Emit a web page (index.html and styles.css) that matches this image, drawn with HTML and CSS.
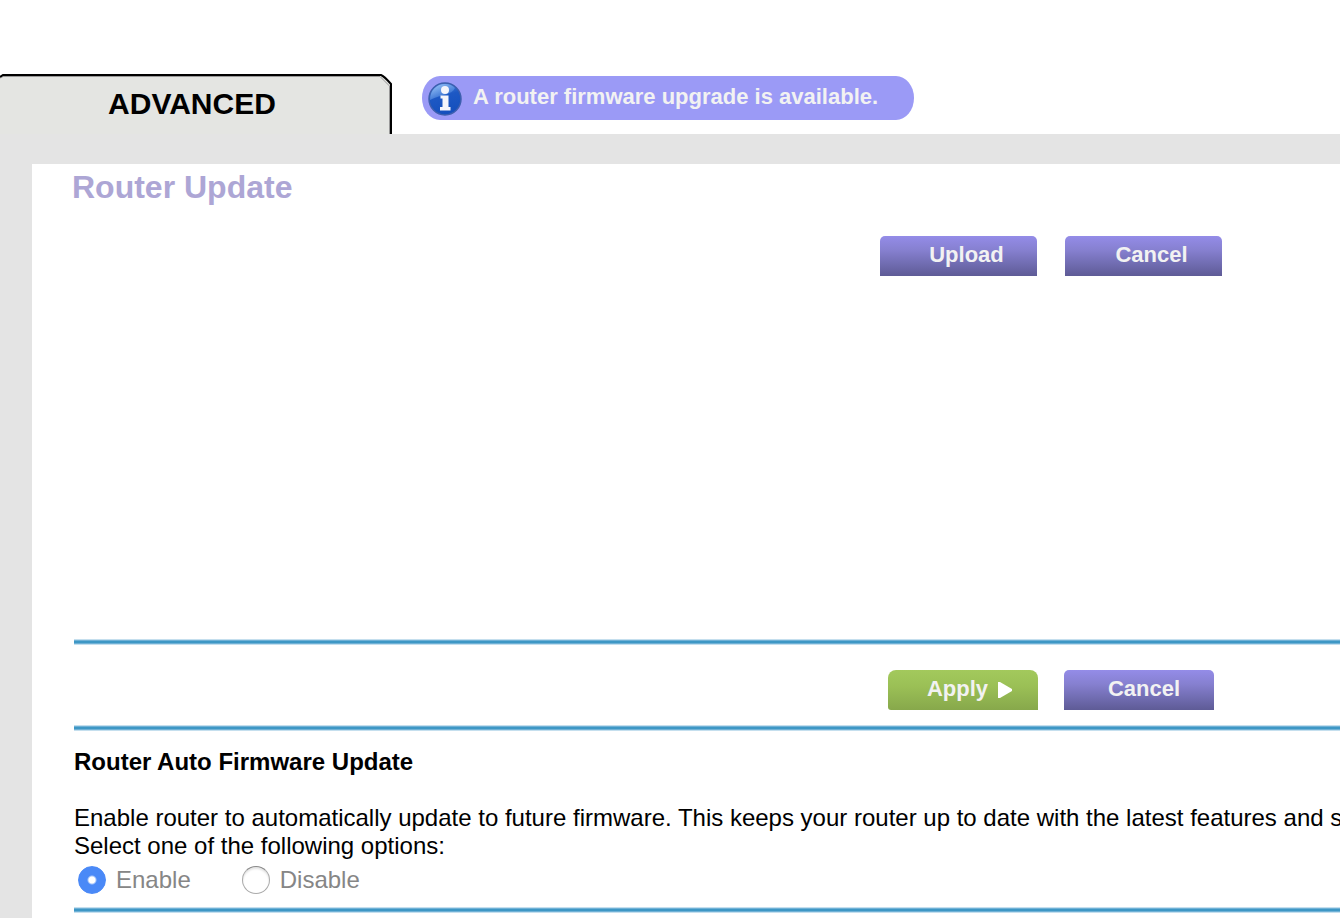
FILE: index.html
```html
<!DOCTYPE html>
<html lang="en">
<head>
<meta charset="utf-8">
<title>Router Update</title>
<link rel="stylesheet" href="styles.css">
</head>
<body>
<header class="header">
  <div class="tab">
    <svg class="tab-shape" viewBox="0 0 392 60" aria-hidden="true">
      <path d="M0 3 L3 1 H381 Q384 2 391 10 V60 H0Z" fill="#e4e5e2"/>
      <path d="M0 4 L3 2.500 H380 L389.500 12 V60" fill="none" stroke="#999" stroke-width="1"/>
      <path d="M0 3 L3 1 H381 Q384 2 391 10 V60" fill="none" stroke="#000" stroke-width="2"/>
    </svg>
    <a class="tab-label" href="#">ADVANCED</a>
  </div>
  <div class="notice" role="status">
    <svg class="notice-icon" viewBox="0 0 36 36" aria-hidden="true">
      <defs>
        <linearGradient id="ball" x1="0" y1="0" x2="0.300" y2="1">
          <stop offset="0" stop-color="#5b98e6"/>
          <stop offset="0.500" stop-color="#1d58c4"/>
          <stop offset="1" stop-color="#1550bd"/>
        </linearGradient>
        <linearGradient id="shine" x1="0" y1="0" x2="0.700" y2="1">
          <stop offset="0" stop-color="#a9cdfa"/>
          <stop offset="1" stop-color="#4a86df" stop-opacity="0.300"/>
        </linearGradient>
      </defs>
      <circle cx="18" cy="19" r="16" fill="url(#ball)" stroke="#3d5fae" stroke-width="1.500"/>
      <path d="M3 20 C3 10 10 4 18 4 C23 4 26 6 28 8 C25 15 15 14 3 20Z" fill="url(#shine)"/>
      <circle cx="18" cy="10" r="4" fill="#f4f5fb"/>
      <path d="M13.500 15.500 H21.500 V27 H23.500 V30.500 H13 V27 H15.500 V18.500 H13.500Z" fill="#f4f5fb"/>
    </svg>
    <span>A router firmware upgrade is available.</span>
  </div>
</header>
<main class="frame">
  <div class="panel">
    <section class="upload">
      <h1 class="title">Router Update</h1>
      <div class="actions">
        <button class="btn" type="button">Upload</button>
        <button class="btn" type="button">Cancel</button>
      </div>
    </section>
    <hr class="rule">
    <div class="actions actions-apply">
      <button class="btn btn-apply" type="button">Apply
        <svg class="arrow" viewBox="0 0 16 18" aria-hidden="true"><path d="M1 1 H3 L15 8 V10 L3 17 H1Z" fill="#fff"/></svg>
      </button>
      <button class="btn btn-short" type="button">Cancel</button>
    </div>
    <hr class="rule">
    <section class="auto">
      <h2 class="subtitle">Router Auto Firmware Update</h2>
      <p class="text">Enable router to automatically update to future firmware. This keeps your router up to date with the latest features and s</p>
      <p class="text">Select one of the following options:</p>
      <div class="options">
        <label class="option"><input class="radio" type="radio" name="auto" checked>Enable</label>
        <label class="option"><input class="radio" type="radio" name="auto">Disable</label>
      </div>
    </section>
    <hr class="rule">
  </div>
</main>
</body>
</html>
```
FILE: styles.css
```css
* {
  box-sizing: border-box;
}

body {
  margin: 0;
  min-height: 100vh;
  display: flex;
  flex-direction: column;
  overflow: hidden;
  background: #fff;
  color: #000;
  font-family: Arial, "Liberation Sans", sans-serif;
  font-size: 24px;
  line-height: 28px;
}

.header {
  display: flex;
  align-items: flex-start;
  gap: 30px;
  padding-top: 74px;
}

.tab {
  display: grid;
  width: 392px;
  height: 60px;
}

.tab-shape,
.tab-label {
  grid-area: 1 / 1;
}

.tab-label {
  padding-right: 8px;
  color: #000;
  font-size: 30px;
  font-weight: bold;
  line-height: 60px;
  text-align: center;
  text-decoration: none;
}

.notice {
  display: flex;
  align-items: center;
  gap: 10px;
  width: 492px;
  height: 44px;
  margin-top: 2px;
  padding: 0 5px;
  border-radius: 18px / 22px;
  background: #9b9af6;
  color: #f2f2f2;
  font-size: 22px;
  font-weight: bold;
  white-space: nowrap;
}

.notice span {
  padding-bottom: 2px;
}

.notice-icon {
  width: 36px;
  height: 36px;
}

.frame {
  flex: 1;
  display: flex;
  padding: 30px 0 0 32px;
  background: #e4e4e4;
}

.panel {
  flex: 1;
  min-width: 0;
  padding-left: 42px;
  background: #fff;
}

.upload {
  min-height: 475px;
  padding-top: 5px;
}

.title {
  margin: 0 0 31px -2px;
  color: #ada6d5;
  font-size: 32px;
  line-height: 36px;
}

.actions {
  display: flex;
  justify-content: flex-end;
  gap: 28px;
  padding-right: 118px;
}

.actions-apply {
  gap: 26px;
  padding: 25px 126px 15px 0;
}

.btn {
  width: 157px;
  height: 40px;
  padding: 0 0 2px 16px;
  border: 0;
  border-radius: 5px 5px 0 0;
  background: linear-gradient(#948ce8, #8680d0 35%, #5e5b96);
  color: #f2f2f2;
  font: bold 22px/36px Arial, "Liberation Sans", sans-serif;
}

.btn-short {
  width: 150px;
  padding-left: 10px;
}

.btn-apply {
  display: flex;
  align-items: center;
  justify-content: center;
  gap: 9px;
  width: 150px;
  padding-left: 14px;
  border-radius: 8px 8px 0 3px;
  background: linear-gradient(#a3c95c, #9bc056 40%, #87a84b);
}

.arrow {
  width: 16px;
  height: 18px;
  margin-top: 2px;
}

.rule {
  height: 6px;
  margin: 0;
  border: 0;
  background: linear-gradient(#c5dfee 1px, #6fb1d6 1px 2px, #3e97c5 2px 4px, #6fb1d6 4px 5px, #c5dfee 5px);
}

.auto {
  padding: 17px 0 13px;
}

.subtitle {
  margin: 0 0 28px;
  font-size: 24px;
}

.text {
  margin: 0;
  white-space: nowrap;
}

.options {
  display: flex;
  gap: 51px;
  padding: 6px 0 0 4px;
}

.option {
  display: flex;
  align-items: center;
  gap: 10px;
  color: #868686;
}

.radio {
  appearance: none;
  width: 28px;
  height: 28px;
  margin: 0;
  border: 1px solid #aaa;
  border-top-color: #888;
  border-radius: 50%;
  background: #fff;
  box-shadow: inset 0 2px 2px #e5e5e5;
}

.radio:checked {
  border-color: #4a89f7;
  background: radial-gradient(circle, #fff 3px, #4a89f7 5px);
  box-shadow: none;
}
```
